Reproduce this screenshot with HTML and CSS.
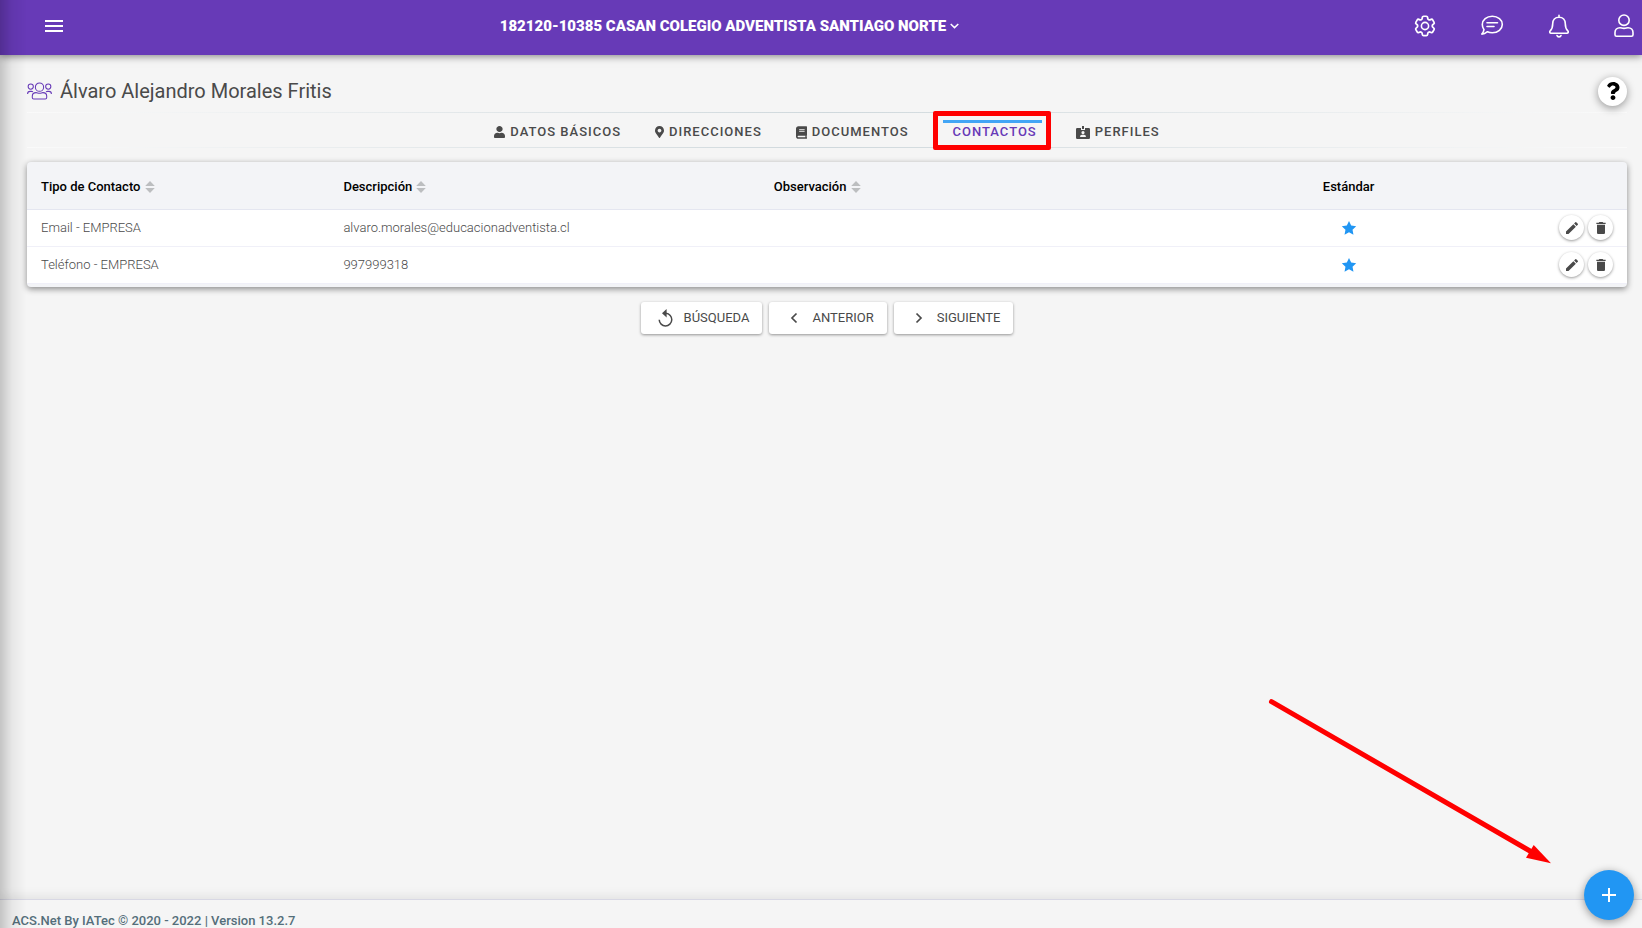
FILE: index.html
```html
<!DOCTYPE html>
<html lang="es">
<head>
<meta charset="utf-8">
<meta name="viewport" content="width=device-width, initial-scale=1">
<title>Contactos - ACS.Net</title>
<link rel="stylesheet" href="styles.css">
</head>
<body>
<svg class="sprite" aria-hidden="true">
  <symbol id="sort" viewBox="0 0 10 12"><path d="M5 0 9.800 5H.2zM5 12 .2 7h9.600z"/></symbol>
  <symbol id="star" viewBox="0 0 24 24"><path d="M12 1.500l3.300 6.900 7.500 1-5.500 5.200 1.400 7.500L12 18.500l-6.700 3.600 1.400-7.500-5.500-5.200 7.500-1z"/></symbol>
  <symbol id="edit" viewBox="0 0 24 24"><path d="M3 17.250V21h3.750L17.810 9.940l-3.750-3.750L3 17.250zM20.710 7.040a1 1 0 0 0 0-1.410l-2.340-2.340a1 1 0 0 0-1.410 0l-1.830 1.830 3.750 3.750 1.830-1.830z"/></symbol>
  <symbol id="trash" viewBox="0 0 24 24"><path d="M6 19c0 1.100.9 2 2 2h8c1.100 0 2-.9 2-2V7H6v12zM19 4h-3.500l-1-1h-5l-1 1H5v2h14V4z"/></symbol>
</svg>

<header class="topbar">
  <button class="icon-btn" aria-label="Menú">
    <svg width="18" height="12" viewBox="0 0 18 12"><path d="M0 1h18M0 6h18M0 11h18" stroke="#fff" stroke-width="2"/></svg>
  </button>
  <div class="topbar-center">
    <button class="entity">182120-10385 CASAN COLEGIO ADVENTISTA SANTIAGO NORTE
      <svg width="9" height="6" viewBox="0 0 9 6"><path d="M.7 1 4.500 4.600 8.300 1" fill="none" stroke="#fff" stroke-width="1.500"/></svg>
    </button>
  </div>
  <nav class="topbar-icons" aria-label="Usuario">
    <button class="icon-btn" aria-label="Configuración">
      <svg class="line" width="24" height="24" viewBox="0 0 24 24"><path d="M9.594 3.940c.09-.542.56-.94 1.110-.94h2.593c.55 0 1.020.398 1.110.94l.213 1.281c.063.374.313.686.645.87.074.04.147.083.22.127.325.196.72.257 1.075.124l1.217-.456a1.125 1.125 0 0 1 1.370.49l1.296 2.247a1.125 1.125 0 0 1-.26 1.431l-1.003.827c-.293.241-.438.613-.43.992a7.723 7.723 0 0 1 0 .255c-.008.378.137.75.43.991l1.004.827c.424.35.534.955.26 1.430l-1.298 2.247a1.125 1.125 0 0 1-1.369.491l-1.217-.456c-.355-.133-.75-.072-1.076.124a6.470 6.470 0 0 1-.22.128c-.331.183-.581.495-.644.869l-.213 1.281c-.09.543-.56.94-1.110.94h-2.594c-.55 0-1.019-.398-1.110-.94l-.213-1.281c-.062-.374-.312-.686-.644-.87a6.520 6.520 0 0 1-.22-.127c-.325-.196-.72-.257-1.076-.124l-1.217.456a1.125 1.125 0 0 1-1.369-.49l-1.297-2.247a1.125 1.125 0 0 1 .26-1.431l1.004-.827c.292-.24.437-.613.43-.991a6.932 6.932 0 0 1 0-.255c.007-.38-.138-.751-.43-.992l-1.004-.827a1.125 1.125 0 0 1-.26-1.430l1.297-2.247a1.125 1.125 0 0 1 1.370-.491l1.216.456c.356.133.751.072 1.076-.124.072-.044.146-.086.22-.128.332-.183.582-.495.644-.869l.214-1.280Z" transform="translate(-1 -1) scale(1.080)"/><circle cx="12" cy="12" r="3.600"/></svg>
    </button>
    <button class="icon-btn" aria-label="Mensajes">
      <svg class="line" width="24" height="24" viewBox="0 0 24 24"><path d="M12.300 2.300c5.700 0 10 3.700 10 8.200s-4.300 8.200-10 8.200c-1.800 0-3.400-.3-4.800-1-1.500 1.200-3.500 2.400-5.700 2.400 1.100-1.100 1.900-2.600 2.200-4.400-1.100-1.500-1.700-3.200-1.700-5.200 0-4.500 4.300-8.200 10-8.200zM7 8.700h10.500M7 12.500h7"/></svg>
    </button>
    <button class="icon-btn" aria-label="Notificaciones">
      <svg class="line" width="24" height="24" viewBox="0 0 24 24"><path d="M12 1.200v2M12 3.200c-4 0-6.300 2.900-6.300 6.500 0 4.600-1.300 6-2.500 7.200-.9.900-.5 2.300.9 2.300h15.800c1.400 0 1.800-1.400.9-2.300-1.200-1.200-2.500-2.600-2.500-7.200 0-3.600-2.300-6.500-6.300-6.500z"/><path d="M10 21.500c.3 1 1 1.400 2 1.400s1.700-.4 2-1.400"/></svg>
    </button>
    <button class="icon-btn" aria-label="Cuenta">
      <svg class="line" width="20" height="24" viewBox="0 0 20 24"><circle cx="10" cy="6.200" r="5.200"/><path d="M6 13.700c1.500 0 2 .7 4 .7s2.500-.7 4-.7c3 0 5 2.200 5 4.900v2.200c0 .9-.6 1.500-1.500 1.500h-15c-.9 0-1.500-.6-1.500-1.500v-2.200c0-2.700 2-4.900 5-4.900z"/></svg>
    </button>
  </nav>
</header>

<main class="content">
  <div class="title-row">
    <svg class="people" width="25" height="18" viewBox="0 0 26 18"><circle cx="13" cy="5" r="4.300"/><circle cx="3.900" cy="4.400" r="2.700"/><circle cx="22.100" cy="4.400" r="2.700"/><path d="M9.500 10.700c1.300 0 1.800.6 3.500.6s2.200-.6 3.500-.6c2.300 0 4 1.600 4 3.700v1.300c0 1-.6 1.600-1.500 1.600H7c-.9 0-1.500-.6-1.500-1.600v-1.300c0-2.100 1.700-3.700 4-3.700zM.6 12c0-1.600 1-2.600 2.600-2.600h1.400c.7 0 1.200.2 1.600.5M25.400 12c0-1.600-1-2.600-2.600-2.600h-1.400c-.7 0-1.200.2-1.600.5"/></svg>
    <h1>Álvaro Alejandro Morales Fritis</h1>
    <button class="round help" aria-label="Ayuda">
      <svg width="14" height="18" viewBox="0 0 384 512"><path d="M202.021 0C122.202 0 70.503 32.703 29.914 91.026c-7.363 10.580-5.093 25.086 5.178 32.874l43.138 32.709c10.373 7.865 25.132 6.026 33.253-4.148 25.049-31.381 43.630-49.449 82.757-49.449 30.764 0 68.816 19.799 68.816 49.631 0 22.552-18.617 34.134-48.993 51.164-35.423 19.860-82.299 44.576-82.299 106.405V320c0 13.255 10.745 24 24 24h72.471c13.255 0 24-10.745 24-24v-5.773c0-42.860 125.268-44.645 125.268-160.627C377.504 66.256 286.902 0 202.021 0zM192 373.459c-38.196 0-69.271 31.075-69.271 69.271 0 38.195 31.075 69.270 69.271 69.270s69.271-31.075 69.271-69.271-31.075-69.270-69.271-69.270z"/></svg>
    </button>
  </div>

  <nav class="tabs" aria-label="Secciones">
    <a class="tab" href="#datos"><svg width="11" height="12" viewBox="0 0 448 512" preserveAspectRatio="none"><path d="M224 256c70.700 0 128-57.300 128-128S294.700 0 224 0 96 57.300 96 128s57.300 128 128 128zm89.600 32h-16.700c-22.200 10.200-46.900 16-72.900 16s-50.600-5.800-72.900-16h-16.700C60.200 288 0 348.200 0 422.400V464c0 26.500 21.500 48 48 48h352c26.500 0 48-21.500 48-48v-41.600c0-74.200-60.200-134.400-134.400-134.400z"/></svg>DATOS BÁSICOS</a>
    <a class="tab" href="#direcciones"><svg width="9" height="12" viewBox="0 0 384 512"><path d="M172.268 501.670C26.970 291.031 0 269.413 0 192 0 85.961 85.961 0 192 0s192 85.961 192 192c0 77.413-26.970 99.031-172.268 309.670-9.535 13.774-29.930 13.773-39.464 0zM192 272c44.183 0 80-35.817 80-80s-35.817-80-80-80-80 35.817-80 80 35.817 80 80 80z"/></svg>DIRECCIONES</a>
    <a class="tab" href="#documentos"><svg width="11" height="13" viewBox="0 0 448 512"><path d="M448 360V24c0-13.300-10.700-24-24-24H96C43 0 0 43 0 96v320c0 53 43 96 96 96h328c13.300 0 24-10.700 24-24v-16c0-7.500-3.500-14.300-8.900-18.700-4.200-15.400-4.200-59.300 0-74.700 5.400-4.300 8.900-11.100 8.900-18.600zM128 134c0-3.300 2.700-6 6-6h212c3.300 0 6 2.700 6 6v20c0 3.300-2.700 6-6 6H134c-3.300 0-6-2.700-6-6v-20zm0 64c0-3.300 2.700-6 6-6h212c3.300 0 6 2.700 6 6v20c0 3.300-2.700 6-6 6H134c-3.300 0-6-2.700-6-6v-20zm253.400 250H96c-17.700 0-32-14.300-32-32 0-17.600 14.400-32 32-32h285.400c-1.900 17.100-1.900 46.900 0 64z"/></svg>DOCUMENTOS</a>
    <a class="tab active" href="#contactos" aria-current="page">CONTACTOS<span class="highlight"></span></a>
    <a class="tab" href="#perfiles"><svg width="14" height="13" viewBox="0 0 14 13"><path fill-rule="evenodd" d="M0 3.200Q0 2 1.200 2H5v2h4V2h3.800Q14 2 14 3.200v8.600q0 1.200-1.200 1.200H1.200Q0 13 0 11.800zM7 5a1.600 1.600 0 1 0 0 3.200A1.600 1.600 0 0 0 7 5zM4 11h6q0-2.200-2-2.200H6q-2 0-2 2.200zM6 0h2v3H6z"/></svg>PERFILES</a>
  </nav>

  <section class="card">
    <table>
      <colgroup><col class="c-type"><col class="c-desc"><col class="c-obs"><col class="c-std"><col></colgroup>
      <thead>
        <tr>
          <th scope="col">Tipo de Contacto <svg class="sort" width="10" height="12"><use href="#sort"/></svg></th>
          <th scope="col">Descripción <svg class="sort" width="10" height="12"><use href="#sort"/></svg></th>
          <th scope="col">Observación <svg class="sort" width="10" height="12"><use href="#sort"/></svg></th>
          <th scope="col" class="center">Estándar</th>
          <td></td>
        </tr>
      </thead>
      <tbody>
        <tr>
          <td>Email - EMPRESA</td>
          <td>alvaro.morales@educacionadventista.cl</td>
          <td></td>
          <td class="center"><svg class="star" width="16" height="16"><use href="#star"/></svg></td>
          <td><div class="actions">
            <button class="round" aria-label="Editar"><svg width="16" height="16"><use href="#edit"/></svg></button>
            <button class="round" aria-label="Eliminar"><svg width="16" height="16"><use href="#trash"/></svg></button>
          </div></td>
        </tr>
        <tr>
          <td>Teléfono - EMPRESA</td>
          <td>997999318</td>
          <td></td>
          <td class="center"><svg class="star" width="16" height="16"><use href="#star"/></svg></td>
          <td><div class="actions">
            <button class="round" aria-label="Editar"><svg width="16" height="16"><use href="#edit"/></svg></button>
            <button class="round" aria-label="Eliminar"><svg width="16" height="16"><use href="#trash"/></svg></button>
          </div></td>
        </tr>
      </tbody>
    </table>
  </section>

  <div class="pager">
    <button class="btn"><svg width="16" height="18" viewBox="0 0 16 18"><path d="M8 4.300a6.300 6.300 0 1 1-6.800 6.500" fill="none" stroke="currentColor" stroke-width="1.500"/><path d="M8.600 0v8.400L4 4.200z"/></svg>BÚSQUEDA</button>
    <button class="btn"><svg width="16" height="18" viewBox="0 0 16 18"><path d="M10.500 4.500 6 9l4.500 4.500" fill="none" stroke="currentColor" stroke-width="1.700"/></svg>ANTERIOR</button>
    <button class="btn"><svg width="16" height="18" viewBox="0 0 16 18"><path d="M5.500 4.500 10 9l-4.500 4.500" fill="none" stroke="currentColor" stroke-width="1.700"/></svg>SIGUIENTE</button>
  </div>
</main>

<footer class="footer">ACS.Net By IATec © 2020 - 2022 | Version 13.2.7</footer>

<svg class="arrow" width="286" height="168" viewBox="0 0 286 168" aria-hidden="true"><path d="M6.500 5.700 265 155" stroke="#f00" stroke-width="5" stroke-linecap="round"/><path d="M268.700 149 286 167.300 261 161.700z" fill="#f00"/></svg>
<button class="fab" aria-label="Agregar"><svg width="14" height="14" viewBox="0 0 14 14"><path d="M7 0v14M0 7h14" stroke="#fff" stroke-width="2"/></svg></button>
<div class="edge-shadow"></div>
</body>
</html>
```
FILE: styles.css
```css
* { box-sizing: border-box; }

body {
  margin: 0;
  min-height: 100vh;
  display: flex;
  flex-direction: column;
  background: #f5f5f5;
  color: #4a4a4a;
  font: 13px/20px Roboto, "Liberation Sans", sans-serif;
}

button {
  font: inherit;
  color: inherit;
  border: 0;
  padding: 0;
  background: none;
  cursor: pointer;
}

svg { display: block; fill: currentColor; }
.sprite { position: absolute; width: 0; height: 0; }

.topbar {
  display: flex;
  align-items: center;
  height: 55px;
  padding: 0 8px 4px 45px;
  background: #673ab7;
  color: #fff;
  box-shadow: 0 1px 8px rgba(0, 0, 0, .5);
}
.topbar-center { flex: 1; display: flex; justify-content: center; }
.entity {
  display: flex;
  align-items: center;
  gap: 4px;
  font-size: 15px;
  font-weight: 900;
}
.topbar-icons { display: flex; align-items: center; gap: 43px; padding-left: 17px; }
.line {
  fill: none;
  stroke: #fff;
  stroke-width: 1.6;
  stroke-linecap: round;
  stroke-linejoin: round;
}

.content { flex: 1; padding: 15px 15px 0 27px; }

.title-row { display: flex; align-items: center; height: 42px; }
.people { fill: none; stroke: #673ab7; stroke-width: 1.1; }
h1 { flex: 1; margin: 0 0 0 8px; font-size: 20px; line-height: 24px; font-weight: 400; }

.round {
  display: flex;
  align-items: center;
  justify-content: center;
  width: 25px;
  height: 25px;
  border-radius: 50%;
  background: #fff;
  box-shadow: 0 1px 3px rgba(0, 0, 0, .4);
}
.help { width: 29px; height: 29px; color: #000; box-shadow: 0 2px 8px rgba(0, 0, 0, .4); }

.tabs {
  display: flex;
  justify-content: center;
  gap: 34px;
  height: 36px;
  border-style: solid;
  border-width: 1px 0;
  border-image: linear-gradient(to right, #fafafa, #cfd8dc 50%, #fafafa) 1;
}
.tab {
  position: relative;
  display: flex;
  align-items: center;
  gap: 5px;
  padding-top: 4px;
  color: #4a4a4a;
  font-weight: 500;
  letter-spacing: 1px;
  text-decoration: none;
}
.active { padding-left: 10px; padding-right: 5px; color: #673ab7; }
.active::before {
  content: "";
  position: absolute;
  top: 7px;
  left: 0;
  right: 0;
  height: 3px;
  background: #42a5f5;
}
.highlight {
  position: absolute;
  inset: -2px -9px -3px -10px;
  border: 5px solid #f00;
  border-radius: 2px;
}

.card {
  margin-top: 14px;
  padding-bottom: 3px;
  border-radius: 4px;
  background: #f3f4f7;
  box-shadow: 0 2px 6px rgba(0, 0, 0, .45);
}
table { width: 100%; border-collapse: collapse; table-layout: fixed; }
.c-type { width: 18.9%; }
.c-desc { width: 26.9%; }
.c-obs { width: 27.3%; }
.c-std { width: 19%; }
th, td { padding: 0 14px; text-align: left; }
thead tr { height: 47px; border-bottom: 1px solid #e4e6f0; }
th { padding-top: 3px; color: #000; font-weight: 500; }
tbody tr { height: 37px; background: #fff; border-bottom: 1px solid #f0f0f8; font-weight: 300; }
.center { text-align: center; }
.sort { display: inline-block; margin-left: 1px; vertical-align: -2px; color: #bcbec0; }
.star { margin: 0 auto; color: #2196f3; }
.actions { display: flex; justify-content: flex-end; gap: 4px; }

.pager { display: flex; justify-content: center; gap: 7px; margin-top: 15px; }
.btn {
  display: flex;
  align-items: center;
  gap: 10px;
  height: 32px;
  padding: 0 13px 0 17px;
  border-radius: 3px;
  background: #fff;
  box-shadow: 0 1px 3px rgba(0, 0, 0, .4);
}

.footer {
  height: 29px;
  padding: 11px 12px 0;
  overflow: hidden;
  border-top: 1px solid #d8d8e4;
  color: #546e7a;
  font-weight: 500;
  line-height: 20px;
  box-shadow: 0 -2px 12px rgba(0, 0, 0, .09);
}

.fab {
  position: fixed;
  right: 8px;
  bottom: 8px;
  display: flex;
  align-items: center;
  justify-content: center;
  width: 50px;
  height: 50px;
  border-radius: 50%;
  background: #2196f3;
  box-shadow: 0 2px 8px rgba(0, 0, 0, .4);
}
.arrow { position: fixed; right: 91px; bottom: 64px; pointer-events: none; }
.edge-shadow {
  position: fixed;
  inset: 0 auto 0 0;
  width: 26px;
  background: linear-gradient(to right, rgba(0, 0, 0, .2), rgba(0, 0, 0, .06) 45%, transparent);
  pointer-events: none;
}
```
